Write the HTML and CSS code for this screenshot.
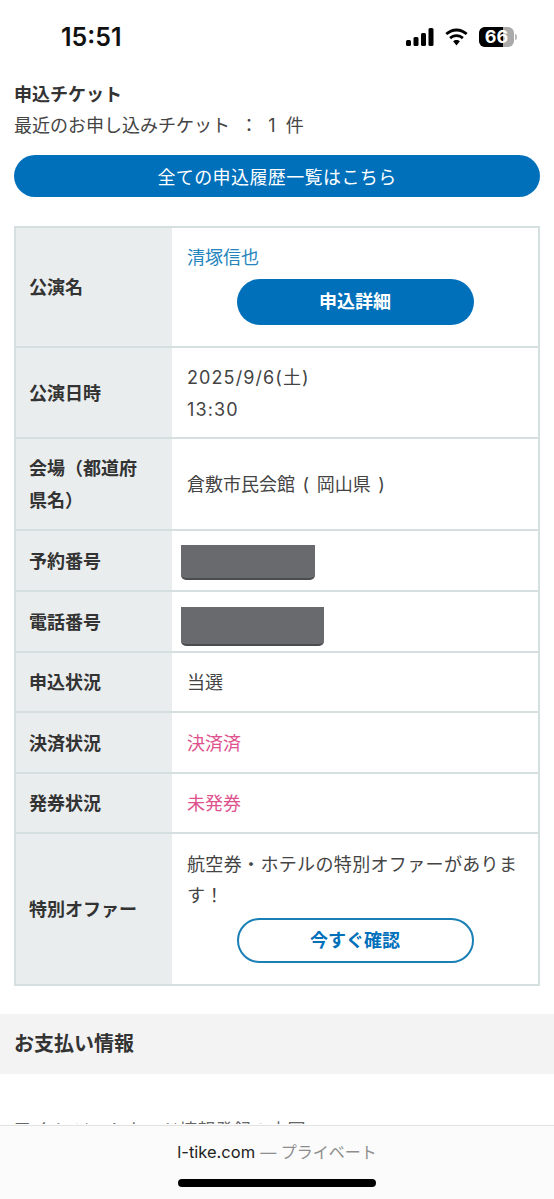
FILE: index.html
```html
<!DOCTYPE html>
<html lang="ja">
<head>
<meta charset="utf-8">
<title>申込チケット</title>
<link rel="stylesheet" href="styles.css">
</head>
<body>
<div class="page">
  <header class="status">
    <span class="time">15:51</span>
    <div class="status-icons">
      <svg class="signal" width="28" height="18" viewBox="0 0 28 18"><rect x="0" y="12" width="5" height="6" rx="1.5"/><rect x="7.5" y="9" width="5" height="9" rx="1.5"/><rect x="15" y="5" width="5" height="13" rx="1.5"/><rect x="22.5" y="0" width="5" height="18" rx="1.5"/></svg>
      <svg class="wifi" width="25" height="18" viewBox="1.5 0 21 17"><path d="M12 3.2c3.400 0 6.500 1.300 8.800 3.500l1.700-1.900C19.700 2.100 16 .4 12 .4S4.300 2.100 1.500 4.800l1.700 1.900C5.500 4.500 8.600 3.200 12 3.200z"/><path d="M12 8.600c1.900 0 3.700.7 5.100 2l1.800-2C17 6.900 14.600 5.900 12 5.900S7 6.900 5.100 8.600l1.800 2c1.400-1.300 3.200-2 5.100-2z"/><path d="M12 11.300c-1.200 0-2.300.5-3.200 1.200L12 16.500l3.200-4c-.9-.7-2-1.200-3.200-1.200z"/></svg>
      <div class="battery"><span class="battery-level"></span><span class="battery-num">66</span></div>
      <span class="battery-cap"></span>
    </div>
  </header>

  <main>
    <section class="intro">
      <h1 class="intro-title">申込チケット</h1>
      <p class="intro-count">最近のお申し込みチケット &nbsp;：&nbsp;&nbsp;1&nbsp;&nbsp;件</p>
      <a class="btn btn-wide">全ての申込履歴一覧はこちら</a>
    </section>

    <section class="table">
      <div class="row row-name">
        <div class="label">公演名</div>
        <div class="value value-top">
          <a class="link">清塚信也</a>
          <a class="btn btn-pill">申込詳細</a>
        </div>
      </div>
      <div class="row row-date">
        <div class="label">公演日時</div>
        <div class="value value-date">2025/9/6(土)<br>13:30</div>
      </div>
      <div class="row row-venue">
        <div class="label">会場（都道府県名）</div>
        <div class="value value-venue">倉敷市民会館 ( 岡山県 )</div>
      </div>
      <div class="row row-a">
        <div class="label">予約番号</div>
        <div class="value"><span class="redact redact-a"></span></div>
      </div>
      <div class="row row-b">
        <div class="label">電話番号</div>
        <div class="value"><span class="redact redact-b"></span></div>
      </div>
      <div class="row row-c">
        <div class="label">申込状況</div>
        <div class="value">当選</div>
      </div>
      <div class="row row-d">
        <div class="label">決済状況</div>
        <div class="value pink">決済済</div>
      </div>
      <div class="row row-c">
        <div class="label">発券状況</div>
        <div class="value pink">未発券</div>
      </div>
      <div class="row row-offer">
        <div class="label">特別オファー</div>
        <div class="value value-top value-offer">
          <p class="offer-text">航空券・ホテルの特別オファーがあります！</p>
          <a class="btn btn-pill btn-outline">今すぐ確認</a>
        </div>
      </div>
    </section>

    <h2 class="pay-head">お支払い情報</h2>
    <div class="pay-clip">
      <p class="pay-text">■ クレジットカード情報登録の方圖</p>
    </div>
  </main>

  <footer class="safari">
    <div class="domain"><span class="host">l-tike.com</span> <span class="private">— プライベート</span></div>
    <div class="home"></div>
  </footer>
</div>
</body>
</html>
```
FILE: styles.css
```css
* { box-sizing: border-box; }
html, body { margin: 0; padding: 0; background: #fff; }
body {
  font-family: "Inter", "Noto Sans CJK JP", sans-serif;
  color: #444;
  font-size: 18px;
}
.page { position: relative; width: 554px; height: 1199px; overflow: hidden; }

.status {
  height: 74px;
  display: flex;
  justify-content: space-between;
  align-items: center;
  padding: 0 37px 0 61px;
}
.time { font-size: 25px; font-weight: 600; color: #111; }
.status-icons { display: flex; align-items: center; }
.signal { fill: #000; margin-right: 10px; }
.wifi { fill: #000; margin-right: 10px; }
.battery {
  position: relative;
  width: 35px; height: 20px;
  border-radius: 6px;
  background: #aaa;
  overflow: hidden;
  display: flex; align-items: center; justify-content: center;
}
.battery-level { position: absolute; left: 0; top: 0; bottom: 0; width: 24px; background: #000; }
.battery-num { position: relative; color: #fff; font-size: 18px; font-weight: 700; line-height: 1; }
.battery-cap { width: 2px; height: 6px; margin-left: 1px; background: #bbb; border-radius: 0 2px 2px 0; }

.intro { padding: 0 14px; }
.intro-title { margin: 5px 0 0; font-size: 18px; font-weight: 700; line-height: 32px; height: 31px; color: #333; }
.intro-count { margin: 0; font-size: 18px; line-height: 32px; }
.btn { display: flex; align-items: center; justify-content: center; text-decoration: none; }
.btn-wide {
  height: 42px;
  margin-top: 13px;
  padding-bottom: 1px;
  border-radius: 21px;
  background: #0070bb;
  color: #fff;
  font-size: 18px;
  letter-spacing: .4px;
}

.table {
  margin: 29px 14px 0;
  border: 2px solid #d5dfe0;
  border-bottom-width: 1px;
}
.row { display: flex; border-bottom: 2px solid #d5dfe0; }
.row:last-child { border-bottom: 1px solid #d5dfe0; }
.label {
  width: 156px;
  flex: none;
  display: flex;
  align-items: center;
  padding: 2px 24px 0 13px;
  background: #e9edee;
  color: #333;
  font-weight: 700;
  line-height: 32px;
}
.value {
  flex: 1;
  padding: 2px 15px 0;
  line-height: 32px;
  align-self: center;
}
.value-top { align-self: flex-start; padding-top: 14px; }
.value-offer { padding-top: 15px; line-height: 31px; }
.value-date { letter-spacing: 1.1px; }
.value-venue { word-spacing: 2.5px; }
.row-name { height: 120px; }
.row-date { height: 91px; }
.row-venue { height: 92px; }
.row-a, .row-b, .row-d { height: 61px; }
.row-c { height: 60px; }
.row-offer { height: 151px; }
.link { color: #2585bd; }
.pink { color: #e0528e; }
.btn-pill {
  width: 237px;
  height: 46px;
  margin: 5px auto 0;
  border-radius: 23px;
  background: #0070bb;
  color: #fff;
  font-weight: 700;
}
.btn-outline {
  height: 45px;
  background: #fff;
  border: 2px solid #1a7fb4;
  color: #0070bb;
  margin-top: 7px;
}
.offer-text { margin: 0; letter-spacing: .35px; }
.redact {
  display: block;
  background: #696a6d;
  border-bottom: 2px solid #4b4c50;
  border-radius: 0 0 5px 5px;
  margin-left: -6px;
}
.redact-a { width: 134px; height: 35px; margin-top: 1px; }
.redact-b { width: 143px; height: 39px; margin-top: 7px; }

.pay-head {
  margin: 28px 0 0;
  height: 60px;
  padding: 0 14px 4px;
  display: flex;
  align-items: center;
  background: #f3f3f3;
  font-size: 20px;
  font-weight: 700;
  color: #333;
}
.pay-clip { margin-top: 41px; height: 9px; overflow: hidden; }
.pay-text { margin: 0 14px; line-height: 32px; color: #666; }

.safari {
  position: absolute;
  left: 0; right: 0; bottom: 0;
  height: 74px;
  background: #fbfbfb;
  border-top: 1px solid #e2e2e2;
}
.domain { text-align: center; line-height: 24px; margin-top: 14px; }
.host { color: #222; font-size: 16.500px; }
.private { color: #8e8e8e; font-size: 16px; }
.home { width: 198px; height: 8px; margin: 15px auto 0; background: #000; border-radius: 4px; }
```
